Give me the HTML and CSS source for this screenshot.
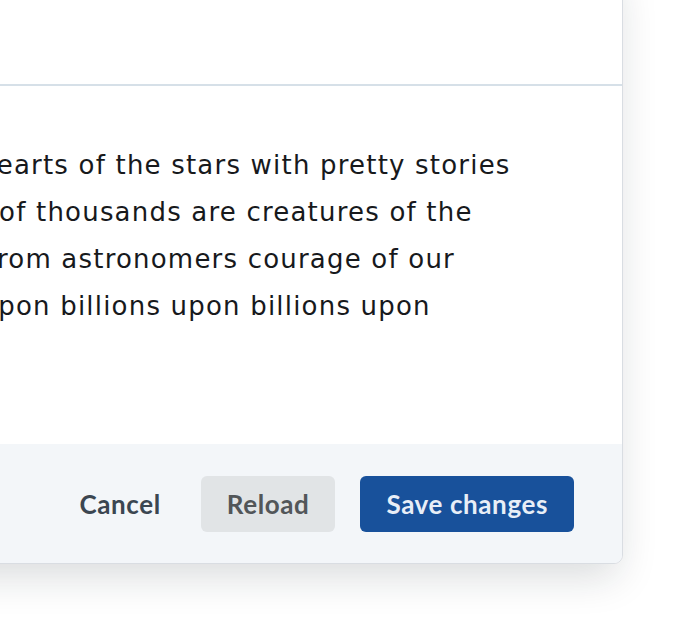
FILE: index.html
```html
<!DOCTYPE html>
<html lang="en">
<head>
<meta charset="utf-8">
<title>Edit note</title>
<link rel="stylesheet" href="styles.css">
</head>
<body>
<div class="stage">
  <div class="modal">
    <div class="modal-header">
      <h2 class="modal-title">Edit note</h2>
    </div>
    <div class="modal-body">
      <p class="modal-text">Tranquility hearts of the stars with pretty stories<br>of hundreds of thousands are creatures of the<br>Descended from astronomers courage of our<br>Questions, upon billions upon billions upon</p>
    </div>
    <div class="modal-footer">
      <button class="btn btn-link">Cancel</button>
      <button class="btn btn-secondary">Reload</button>
      <button class="btn btn-primary">Save changes</button>
    </div>
  </div>
</div>
</body>
</html>
```
FILE: styles.css
```css
* { box-sizing: border-box; }
html, body {
  margin: 0;
  padding: 0;
  background: #ffffff;
  overflow: hidden;
  width: 680px;
  height: 640px;
}
body {
  font-family: Lato, "Liberation Sans", sans-serif;
  color: #1b1f23;
}
.stage {
  width: 680px;
  height: 640px;
  overflow: hidden;
}
.modal {
  width: 851px;
  margin-left: -228px;
  margin-top: -40px;
  background: #ffffff;
  border: 1px solid #d9dde2;
  border-radius: 9px;
  box-shadow: 0 18px 40px -6px rgba(20, 30, 40, 0.16);
  overflow: hidden;
}
.modal-header {
  height: 125px;
  border-bottom: 2px solid #d6e0e8;
  padding: 0 48px;
}
.modal-title {
  margin: 0;
  visibility: hidden;
}
.modal-body {
  padding: 56px 48px 114px;
}
.modal-text {
  margin: 0;
  font-family: "DejaVu Sans", sans-serif;
  font-size: 26px;
  line-height: 47px;
  letter-spacing: 1.2px;
  white-space: nowrap;
  color: #17191c;
}
.modal-footer {
  background: #f3f6f9;
  padding: 32px 48px 31px;
  display: flex;
  justify-content: flex-end;
  align-items: center;
}
.btn {
  font-family: Lato, "Liberation Sans", sans-serif;
  font-weight: 700;
  font-size: 26px;
  letter-spacing: 0.6px;
  height: 56px;
  padding: 0 26px;
  border: none;
  border-radius: 6px;
  cursor: pointer;
}
.btn-link {
  background: transparent;
  color: #3b4651;
  margin-right: 14px;
}
.btn-secondary {
  background: #e1e4e6;
  color: #525659;
  margin-right: 25px;
}
.btn-primary {
  background: #18519b;
  color: #e8eef7;
}
```
